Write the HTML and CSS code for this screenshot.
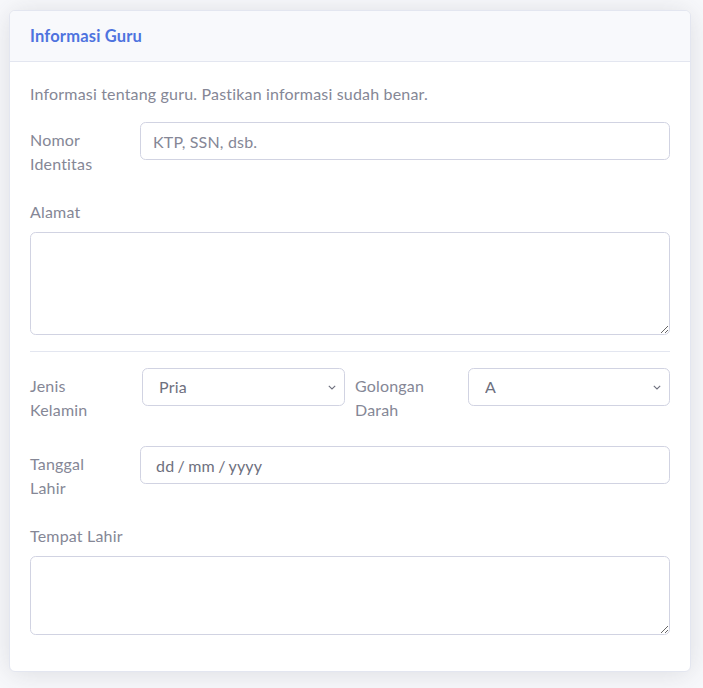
FILE: index.html
```html
<!DOCTYPE html>
<html lang="id">
<head>
<meta charset="utf-8">
<title>Informasi Guru</title>
<link rel="stylesheet" href="styles.css">
</head>
<body>
<div class="page">
  <div class="card">
    <div class="card-header">
      <h6 class="card-title">Informasi Guru</h6>
    </div>
    <div class="card-body">
      <p class="intro">Informasi tentang guru. Pastikan informasi sudah benar.</p>

      <div class="row-inline">
        <label class="col-label" for="nomor">Nomor Identitas</label>
        <input id="nomor" class="form-control" type="text" placeholder="KTP, SSN, dsb.">
      </div>

      <div class="group">
        <label class="form-label" for="alamat">Alamat</label>
        <textarea id="alamat" class="form-control area-lg"></textarea>
      </div>

      <hr class="divider">

      <div class="row-split">
        <label class="col-label" for="jk">Jenis Kelamin</label>
        <select id="jk" class="form-control select">
          <option>Pria</option>
          <option>Wanita</option>
        </select>
        <label class="col-label label-second" for="gd">Golongan Darah</label>
        <select id="gd" class="form-control select">
          <option>A</option>
          <option>B</option>
          <option>AB</option>
          <option>O</option>
        </select>
      </div>

      <div class="row-inline">
        <label class="col-label" for="tgl">Tanggal Lahir</label>
        <input id="tgl" class="form-control date" type="text" placeholder="dd / mm / yyyy">
      </div>

      <div class="group">
        <label class="form-label" for="tempat">Tempat Lahir</label>
        <textarea id="tempat" class="form-control area-sm"></textarea>
      </div>
    </div>
  </div>
</div>
</body>
</html>
```

FILE: styles.css
```css
* { box-sizing: border-box; }

html, body {
  margin: 0;
  padding: 0;
  background: #f8f9fc;
}

body {
  font-family: "Lato", "Noto Sans", sans-serif;
  font-size: 16px;
  line-height: 24px;
  letter-spacing: 0.18px;
  color: #858796;
}

.page {
  padding: 10px 12px 17px 9px;
}

.card {
  background: #fff;
  border: 1px solid #e3e6f0;
  border-radius: 6px;
  box-shadow: 0 2px 28px 0 rgba(58, 59, 69, 0.15);
  overflow: hidden;
}

.card-header {
  background: #f8f9fc;
  border-bottom: 1px solid #e3e6f0;
  padding: 12px 20px;
}

.card-title {
  margin: 0;
  font-size: 16.5px;
  line-height: 26px;
  font-weight: 700;
  color: #4e73df;
}

.card-body {
  padding: 20px;
}

.intro {
  margin: 0 0 16px;
}

.row-inline {
  display: grid;
  grid-template-columns: 110px 1fr;
  align-items: start;
  margin-bottom: 16px;
}

.row-split {
  display: grid;
  grid-template-columns: 112px 203px 123px 202px;
  align-items: start;
  margin-bottom: 16px;
}

.col-label {
  display: block;
  padding: 6px 24px 8px 0;
}

.row-split .col-label {
  padding-right: 26px;
}

.row-split .label-second {
  padding-left: 10px;
  padding-right: 26px;
}

.group {
  margin-bottom: 16px;
}

.form-label {
  display: block;
  margin-bottom: 8px;
}

.form-control {
  display: block;
  width: 100%;
  height: 38px;
  padding: 6px 12px;
  font-family: inherit;
  font-size: 16px;
  line-height: 24px;
  letter-spacing: 0.18px;
  color: #6e707e;
  background-color: #fff;
  border: 1px solid #d1d3e2;
  border-radius: 5.6px;
  outline: none;
}

.form-control::placeholder {
  color: #858796;
  opacity: 1;
}

.select {
  appearance: none;
  -webkit-appearance: none;
  padding: 6px 24px 6px 16px;
  background-image: url("data:image/svg+xml,%3Csvg xmlns='http://www.w3.org/2000/svg' width='8' height='5' viewBox='0 0 8 5'%3E%3Cpath d='M0.8 0.8 L4 4 L7.2 0.8' fill='none' stroke='%236e707e' stroke-width='1.1'/%3E%3C/svg%3E");
  background-repeat: no-repeat;
  background-position: right 8px center;
  background-size: 8px 5px;
}

.date {
  padding-left: 15px;
}

.date::placeholder {
  color: #6e707e;
  word-spacing: -1px;
}

.area-lg {
  height: 103px;
  resize: vertical;
}

.area-sm {
  height: 79px;
  resize: vertical;
}

.divider {
  border: 0;
  border-top: 1px solid #e3e6f0;
  margin: 0 0 16px;
}
```
